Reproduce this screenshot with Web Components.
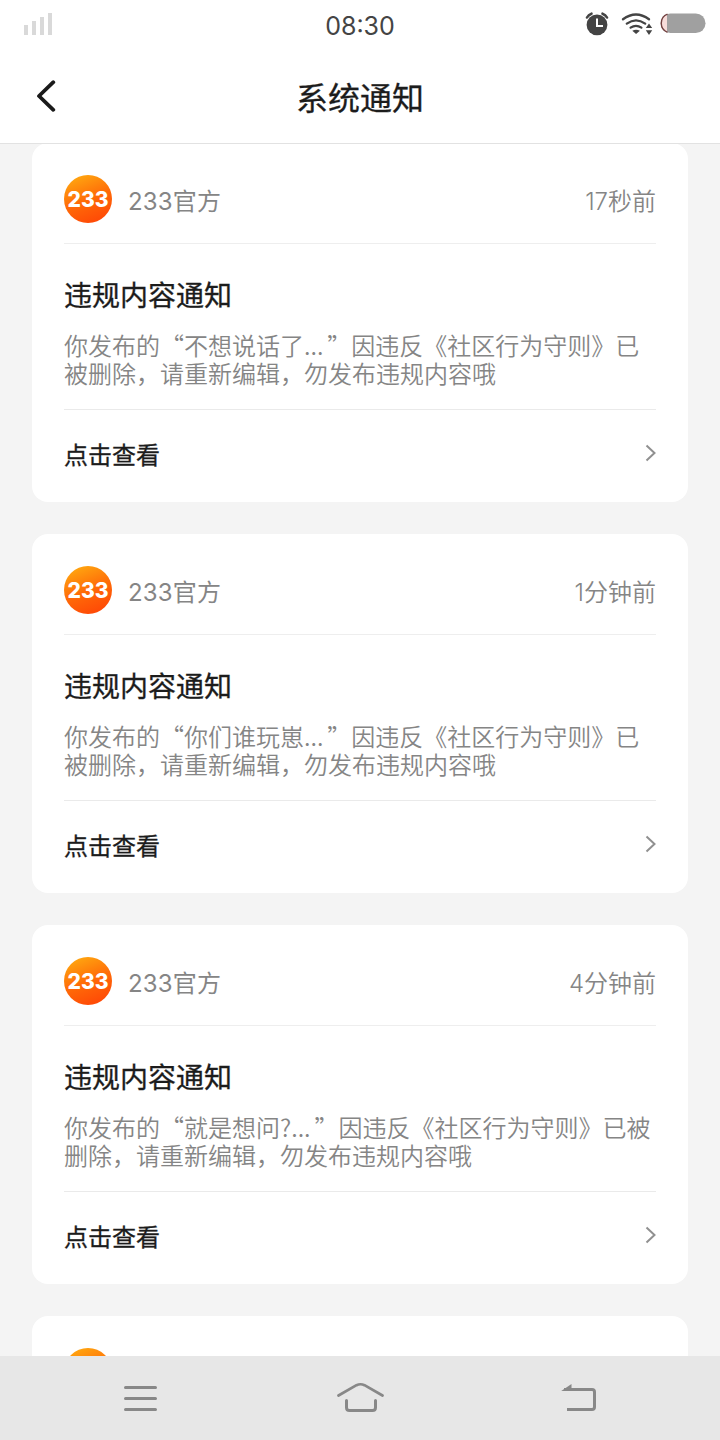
<!DOCTYPE html>
<html lang="zh-CN">
<head>
<meta charset="utf-8">
<title>系统通知</title>
<style>
  html, body {
    margin: 0;
    height: 100%;
    overflow: hidden;
    font-family: Inter, "Noto Sans CJK SC", sans-serif;
  }
</style>
</head>
<body>
<notice-screen>
  <status-bar slot="top">08:30</status-bar>
  <title-bar slot="top">系统通知</title-bar>
  <notice-card author="233官方" time="17秒前" heading="违规内容通知" action="点击查看">你发布的“不想说话了... ”因违反《社区行为守则》已被删除，请重新编辑，勿发布违规内容哦</notice-card>
  <notice-card author="233官方" time="1分钟前" heading="违规内容通知" action="点击查看">你发布的“你们谁玩崽... ”因违反《社区行为守则》已被删除，请重新编辑，勿发布违规内容哦</notice-card>
  <notice-card author="233官方" time="4分钟前" heading="违规内容通知" action="点击查看">你发布的“就是想问?... ”因违反《社区行为守则》已被删除，请重新编辑，勿发布违规内容哦</notice-card>
  <notice-card></notice-card>
  <nav-bar slot="bottom"></nav-bar>
</notice-screen>

<script>
/** Attaches an open shadow root holding the given markup */
function render(host, html) {
  const template = document.createElement("template");
  template.innerHTML = html;
  host.attachShadow({ mode: "open" }).appendChild(template.content.cloneNode(true));
}

class NoticeScreen extends HTMLElement {
  constructor() {
    super();
    render(this, `
      <style>
        :host {
          display: flex;
          flex-direction: column;
          height: 1440px;
          background: #f4f4f4;
        }
        .list {
          flex: 1;
          min-height: 0;
          overflow: hidden;
          display: flex;
          flex-direction: column;
          gap: 32px;
          padding: 0 32px;
          margin-top: -1px;
        }
      </style>
      <slot name="top"></slot>
      <div class="list"><slot></slot></div>
      <slot name="bottom"></slot>
    `);
  }
}

class StatusBar extends HTMLElement {
  constructor() {
    super();
    render(this, `
      <style>
        :host {
          display: grid;
          grid-template-columns: 1fr auto 1fr;
          align-items: center;
          height: 52px;
          box-sizing: border-box;
          padding: 0 14px 0 24px;
          background: #fff;
          color: #444;
          font-size: 25px;
          flex: none;
        }
        .time {
          margin-left: -10px;
        }
        svg {
          display: block;
          margin-bottom: 4px;
        }
        .icons {
          justify-self: end;
        }
      </style>
      <svg width="30" height="22" viewBox="0 0 30 22" fill="#d9d9d9">
        <path d="M0 12h4v10H0zM8 8h4v14H8zM16 4h4v18h-4zM24 0h4v22h-4z"/>
      </svg>
      <span class="time"><slot></slot></span>
      <svg class="icons" width="122" height="26" viewBox="584 11 122 26">
        <circle cx="597" cy="24.800" r="10.400" fill="#444"/>
        <path d="M587 17.500a8 8 0 0 1 4.500-3.800M607 17.500a8 8 0 0 0-4.500-3.800" fill="none" stroke="#444" stroke-width="2.600" stroke-linecap="round"/>
        <path d="M597 18.500v7.500h6" fill="none" stroke="#fff" stroke-width="2"/>
        <g fill="none" stroke="#444" stroke-width="2.300" stroke-linecap="round">
          <path d="M623 19.300q13-9.500 26 0"/>
          <path d="M626.800 23.600q9.200-6.600 18.400 0"/>
          <path d="M630.600 27.600q5.400-3.600 10.800 0"/>
        </g>
        <path d="M632.300 30.800q3.800-2.200 7.600 0L636.100 34z" fill="#444"/>
        <path d="M649 23.600l3.200 4.400h-6.400zM649 35l3.200-4.800h-6.400z" fill="#444"/>
        <rect x="660.500" y="13.500" width="45" height="19.500" rx="9.750" fill="#a0a0a0"/>
        <path d="M667 14.500a9.300 9.300 0 0 0 0 17.500z" fill="#f7dcda"/>
        <path d="M667.500 14.200a9.700 9.700 0 0 0 0 18.100" fill="none" stroke="#73403f" stroke-width="1.300"/>
      </svg>
    `);
  }
}

class TitleBar extends HTMLElement {
  constructor() {
    super();
    render(this, `
      <style>
        :host {
          display: grid;
          position: relative;
          z-index: 1;
          grid-template-columns: 1fr auto 1fr;
          align-items: center;
          height: 92px;
          box-sizing: border-box;
          padding: 0 36px;
          background: #fff;
          border-bottom: 1px solid #e2e2e2;
          color: #1c1c1c;
          font-size: 32px;
          -webkit-text-stroke: .3px #1c1c1c;
          line-height: 48px;
          flex: none;
        }
        span {
          padding-top: 3px;
        }
        svg {
          display: block;
          margin-bottom: 3px;
        }
      </style>
      <svg width="20" height="32" viewBox="0 0 20 32" fill="none" stroke="#1a1a1a" stroke-width="3.800" stroke-linecap="round" stroke-linejoin="round">
        <path d="M17.300 2.200L3 16l14.300 13.800"/>
      </svg>
      <span><slot></slot></span>
    `);
  }
}

class BrandAvatar extends HTMLElement {
  constructor() {
    super();
    render(this, `
      <style>
        :host {
          display: block;
          width: 48px;
          height: 48px;
          flex: none;
        }
        svg {
          display: block;
        }
      </style>
      <svg width="48" height="48" viewBox="0 0 48 48">
        <defs>
          <linearGradient id="fill" x1=".2" y1="0" x2=".6" y2="1">
            <stop offset="0" stop-color="#ffaa10"/>
            <stop offset=".55" stop-color="#ff6a08"/>
            <stop offset="1" stop-color="#ff4a06"/>
          </linearGradient>
        </defs>
        <circle cx="24" cy="24" r="24" fill="url(#fill)"/>
        <text x="3.500" y="31.500" textLength="41" lengthAdjust="spacingAndGlyphs" fill="#fff" font-family="Inter, sans-serif" font-weight="800" font-size="21">233</text>
      </svg>
    `);
  }
}

class NoticeCard extends HTMLElement {
  constructor() {
    super();
    render(this, `
      <style>
        :host {
          display: block;
          height: 359px;
          box-sizing: border-box;
          padding: 0 32px;
          background: #fff;
          border-radius: 16px;
          color: #858585;
          font-size: 24px;
          flex: none;
        }
        header {
          display: flex;
          align-items: center;
          height: 101px;
          box-sizing: border-box;
          padding-top: 12px;
          border-bottom: 1px solid #eee;
        }
        .author {
          margin-left: 16px;
          letter-spacing: .150px;
          flex: 1;
        }
        .time {
          font-weight: 350;
        }
        .content {
          height: 166px;
          box-sizing: border-box;
          padding-top: 31px;
          border-bottom: 1px solid #eaeaea;
        }
        h2 {
          margin: 0 0 14px;
          color: #1c1c1c;
          font-size: 28px;
          font-weight: 400;
          -webkit-text-stroke: .3px #1c1c1c;
          line-height: 42px;
        }
        p {
          margin: 0;
          font-family: "Noto Sans CJK SC", sans-serif;
          font-weight: 350;
          line-height: 28px;
          /* narrows the gap before the closing quote */
          word-spacing: -1.400px;
        }
        footer {
          display: flex;
          align-items: center;
          justify-content: space-between;
          height: 92px;
          box-sizing: border-box;
          color: #1c1c1c;
          -webkit-text-stroke: .3px #1c1c1c;
        }
        .action {
          padding-bottom: 5px;
        }
        footer svg {
          margin-bottom: 7px;
        }
      </style>
      <header>
        <brand-avatar></brand-avatar>
        <span class="author"></span>
        <span class="time"></span>
      </header>
      <section class="content">
        <h2></h2>
        <p><slot></slot></p>
      </section>
      <footer>
        <span class="action"></span>
        <svg width="12" height="18" viewBox="0 0 12 18" fill="none" stroke="#909090" stroke-width="2">
          <path d="M2.500 1.500L10.500 9l-8 7.500"/>
        </svg>
      </footer>
    `);
  }

  connectedCallback() {
    const root = this.shadowRoot;
    root.querySelector(".author").textContent = this.getAttribute("author");
    root.querySelector(".time").textContent = this.getAttribute("time");
    root.querySelector("h2").textContent = this.getAttribute("heading");
    root.querySelector(".action").textContent = this.getAttribute("action");
  }
}

class NavBar extends HTMLElement {
  constructor() {
    super();
    render(this, `
      <style>
        :host {
          display: flex;
          align-items: center;
          justify-content: space-between;
          height: 84px;
          box-sizing: border-box;
          padding: 0 123px;
          background: #e7e7e7;
          flex: none;
        }
        svg {
          fill: none;
          stroke: #888;
          stroke-width: 3;
          stroke-linecap: round;
          stroke-linejoin: round;
        }
      </style>
      <svg width="35" height="32" viewBox="0 0 35 32">
        <path d="M2.500 5.500h30M2.500 16.500h30M2.500 27.500h30"/>
      </svg>
      <svg width="48" height="32" viewBox="0 0 48 32">
        <path d="M2.500 13.500L20.500 3.200q4-1.900 8 0L46.500 13.500" stroke-width="2.700"/>
        <path d="M10.500 18.500v7q0 3 3 3h23q3 0 3-3v-7"/>
      </svg>
      <svg width="36" height="32" viewBox="0 0 36 32">
        <path d="M3 7.500h28q2.500 0 2.500 2.500v15q0 2.500-2.500 2.500H6" stroke-linecap="butt"/>
        <path d="M.2 9L10.500 2v7z" fill="#888" stroke="none"/>
      </svg>
    `);
  }
}

customElements.define("notice-screen", NoticeScreen);
customElements.define("status-bar", StatusBar);
customElements.define("title-bar", TitleBar);
customElements.define("brand-avatar", BrandAvatar);
customElements.define("notice-card", NoticeCard);
customElements.define("nav-bar", NavBar);
</script>
</body>
</html>
